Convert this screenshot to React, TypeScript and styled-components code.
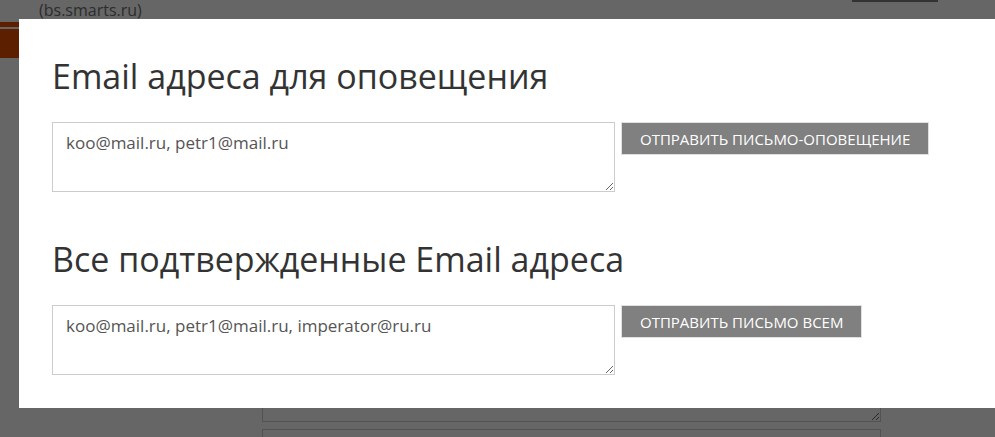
import React from 'react';
import styled, { createGlobalStyle } from 'styled-components';

const GlobalStyle = createGlobalStyle`
  html, body {
    margin: 0;
    padding: 0;
    background: #ffffff;
    font-family: 'Open Sans', 'Noto Sans', sans-serif;
    overflow: hidden;
  }
  * {
    box-sizing: border-box;
  }
`;

const emailGroups = [
  {
    title: 'Email адреса для оповещения',
    emails: 'koo@mail.ru, petr1@mail.ru',
    action: 'Отправить письмо-оповещение',
  },
  {
    title: 'Все подтвержденные Email адреса',
    emails: 'koo@mail.ru, petr1@mail.ru, imperator@ru.ru',
    action: 'Отправить письмо всем',
  },
];

const App = () => {
  return (
    <>
      <GlobalStyle />
      <Page>
        <TopBar>
          <SiteName>(bs.smarts.ru)</SiteName>
          <LoginBtn />
        </TopBar>
        <NavStripe />
        <NavBar />
        <Form>
          <BackArea defaultValue='' />
          <BackInput />
        </Form>
      </Page>

      <Overlay>
        <Dialog>
          {emailGroups.map((group) => (
            <Section key={group.title}>
              <Heading>{group.title}</Heading>
              <Row>
                <EmailArea defaultValue={group.emails} />
                <SendBtn type='button'>{group.action}</SendBtn>
              </Row>
            </Section>
          ))}
        </Dialog>
      </Overlay>
    </>
  );
};

export default App;

const Page = styled.div`
  width: 995px;
  height: 437px;
  overflow: hidden;
`;

const TopBar = styled.div`
  display: flex;
  align-items: flex-start;
  justify-content: space-between;
  height: 22px;
  padding: 0 57px 0 39px;
`;

const SiteName = styled.span`
  font-size: 16px;
  line-height: 20px;
  color: #707070;
`;

const LoginBtn = styled.div`
  width: 86px;
  height: 2px;
  border-bottom: 2px solid #808080;
`;

const NavStripe = styled.div`
  height: 5px;
  background: #e64e00;
`;

const NavBar = styled.div`
  height: 29px;
  margin-top: 2px;
  background: #e64e00;
`;

const Form = styled.div`
  display: flex;
  flex-direction: column;
  gap: 7px;
  width: 619px;
  margin: 284px 0 0 262px;
`;

const BackArea = styled.textarea`
  width: 100%;
  height: 80px;
  border: 1px solid #cccccc;
  font-family: inherit;
`;

const BackInput = styled.div`
  width: 100%;
  height: 30px;
  border: 1px solid #cccccc;
`;

const Overlay = styled.div`
  position: fixed;
  inset: 0;
  background: rgba(0, 0, 0, 0.6);
`;

const Dialog = styled.div`
  position: absolute;
  top: 19px;
  left: 19px;
  width: 1100px;
  height: 389px;
  background: #ffffff;
  padding: 1px 33px 0;
`;

const Section = styled.section`
  margin-top: 36px;

  & + & {
    margin-top: 47px;
  }
`;

const Heading = styled.h3`
  margin: 0 0 26px;
  font-size: 34px;
  font-weight: 400;
  line-height: 40px;
  color: #333333;
`;

const Row = styled.div`
  display: flex;
  align-items: flex-start;
  gap: 6px;
`;

const EmailArea = styled.textarea`
  width: 563px;
  height: 70px;
  padding: 9px 13px 8px;
  border: 1px solid #cccccc;
  font-family: inherit;
  font-size: 17px;
  line-height: 22px;
  color: #555555;
  resize: both;
  outline: none;
`;

const SendBtn = styled.button`
  height: 33px;
  padding: 0 18px;
  border: 1px solid #e0e0e0;
  background: #808080;
  color: #ffffff;
  font-family: inherit;
  font-size: 15px;
  text-transform: uppercase;
  cursor: pointer;
`;
